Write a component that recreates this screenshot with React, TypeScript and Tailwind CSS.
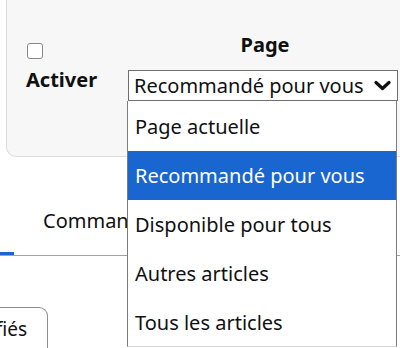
import React from "react";

const options = [
  "Page actuelle",
  "Recommandé pour vous",
  "Disponible pour tous",
  "Autres articles",
  "Tous les articles",
];

const App = () => {
  const selected = 1;

  return (
    <div className="relative w-[400px] h-[348px] overflow-hidden bg-white text-[#0f1111] font-['Noto_Sans',sans-serif]">
      {/* settings card, its top runs off the page */}
      <div className="ml-[6px] -mr-[10px] h-[157px] flex border border-t-0 border-[#dddddd] rounded-bl-[10px] bg-[#f7f7f7]">
        <div className="w-[121px] pl-[19px] pt-[43px]">
          <div className="ml-[1px] w-[16px] h-[16px] rounded-[3px] border border-[#888888] bg-white" />
          <div className="mt-[9px] text-[20px] leading-[24px] font-bold">Activer</div>
        </div>
        <div className="w-[270px] pt-[33px] flex flex-col items-center">
          <div className="text-[20px] leading-[24px] font-bold pl-[4px]">Page</div>
          <div className="mt-[13px] w-full h-[31px] flex items-center justify-between border border-[#6f6f6f] bg-white pl-[5px] pr-[6px]">
            <span className="text-[20px] leading-[24px]">Recommandé pour vous</span>
            <svg width="17" height="11" viewBox="0 0 17 11" fill="none">
              <path d="M2 2.5 L8.5 8.5 L15 2.5" stroke="#0f1111" strokeWidth="3.2" strokeLinecap="round" strokeLinejoin="round" />
            </svg>
          </div>
        </div>
      </div>

      {/* tabs */}
      <div className="mt-[43px] h-[56px] flex border-b border-[#a3a3a3]">
        <div className="w-[14px] h-[3px] self-end bg-[#1a66d0]" />
        <div className="pl-[29px] pt-[9px] text-[20px] leading-[24px] whitespace-nowrap">Commandes</div>
      </div>

      {/* filter pill, cut at the left edge */}
      <div className="mt-[51px] w-[48px] flex justify-end">
        <div className="shrink-0 h-[50px] border border-b-0 border-[#8d8d8d] rounded-tr-[9px] pt-[9px] pl-[14px] pr-[20px] text-[19px] leading-[24px] whitespace-nowrap">
          Non vérifiés
        </div>
      </div>

      {/* open dropdown list */}
      <ul className="absolute left-[127px] top-[101px] w-[270px] h-[246px] pt-[1px] bg-white border-x border-b border-x-[#7d7d7d] border-b-[#d4d4d4]">
        {options.map((o, i) => (
          <li
            key={o}
            className={
              i === selected
                ? "h-[49px] flex items-center pl-[7px] text-[20px] bg-[#1a66d0] text-white"
                : "h-[49px] flex items-center pl-[7px] text-[20px]"
            }
          >
            {o}
          </li>
        ))}
      </ul>
    </div>
  );
};

export default App;
